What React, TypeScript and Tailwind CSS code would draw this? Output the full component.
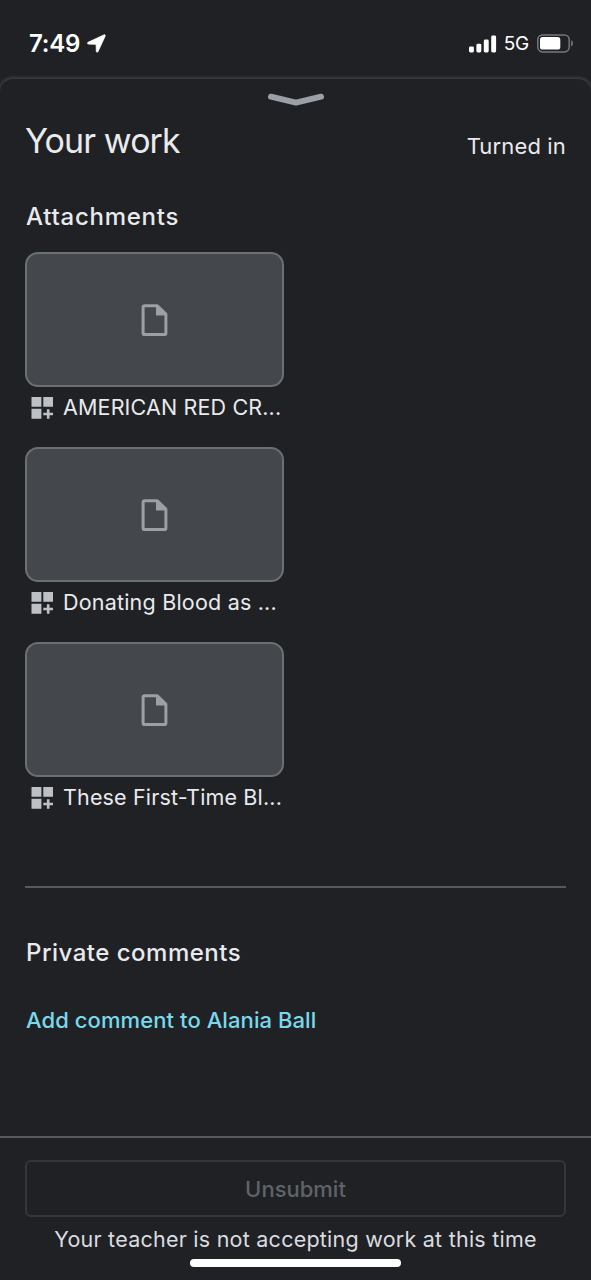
const ATTACHMENTS = [
  { title: "AMERICAN RED CR...", spacing: "tracking-[0.15px]" },
  { title: "Donating Blood as ...", spacing: "tracking-[0.2px]" },
  { title: "These First-Time Bl...", spacing: "tracking-[0.15px]" },
];

function StatusBar() {
  return (
    <header className="flex h-[77px] shrink-0 items-center justify-between pt-[10px] pr-[17px] pl-[29px] text-white">
      <div className="flex items-center gap-[7px]">
        <span className="text-[24px] leading-none font-semibold tracking-[-0.2px]">7:49</span>
        <svg width="19" height="19" viewBox="0 0 19 19" fill="currentColor" stroke="currentColor" strokeWidth="0.8" strokeLinejoin="round">
          <path d="M16.9.9 1.1 8.3c-1 .5-.8 1.7.4 1.8l7.6.2.2 7c.1 1.1 1.2 1.3 1.7.3L18.1 2.2C18.5 1.2 17.9.4 16.9.9Z" />
        </svg>
      </div>
      <div className="flex items-center">
        <svg width="28" height="18" viewBox="0 0 28 18" fill="currentColor">
          <rect x="0" y="11.5" width="4.9" height="6" rx="1.4" />
          <rect x="7.4" y="8.7" width="4.9" height="8.8" rx="1.4" />
          <rect x="14.8" y="4.6" width="4.9" height="12.9" rx="1.4" />
          <rect x="22.2" y="0.5" width="4.9" height="17" rx="1.4" />
        </svg>
        <span className="ml-[7px] text-[19px] leading-none font-normal tracking-[-0.3px]">5G</span>
        <svg className="ml-[8px]" width="37" height="19" viewBox="0 0 37 19">
          <rect x="0.8" y="0.9" width="31.4" height="17" rx="4.8" fill="none" stroke="#77787b" strokeWidth="1.5" />
          <rect x="3" y="3.1" width="20.3" height="12.5" rx="2.6" fill="#fff" />
          <path d="M34.2 6.3c2.4 1 2.4 5.2 0 6.2Z" fill="#77787b" />
        </svg>
      </div>
    </header>
  );
}

function FileIcon() {
  return (
    <svg width="27" height="32" viewBox="0 0 27 32">
      <path d="M3.5 1.7h12.6L24.9 10v19.4a1.2 1.2 0 0 1-1.2 1.2H3.5a1.4 1.4 0 0 1-1.4-1.4V3.1a1.4 1.4 0 0 1 1.4-1.4Z" fill="none" stroke="#9aa0a6" strokeWidth="3" strokeLinejoin="round" />
      <path d="M15 1.6v9.8h10.5V9.7L16.5 1.3Z" fill="#9aa0a6" />
    </svg>
  );
}

function AppsIcon() {
  return (
    <svg className="shrink-0" width="22" height="22" viewBox="0 0 22 22" fill="#bdc1c6">
      <path d="M.5 0h9.9v9.7H.5zM12.3 0h9.7v9.7h-9.7zM.5 11.8h9.9v9.9H.5zM15.9 12.3h2.6v3.4H22v2.6h-3.5v3.5h-2.6v-3.5h-3.6v-2.6h3.6z" />
    </svg>
  );
}

export default function App() {
  return (
    <div className="flex h-[1280px] w-full flex-col overflow-hidden bg-[#202124] font-[Inter,sans-serif] text-[#e8eaed]">
      <StatusBar />

      <main className="mt-[2px] flex flex-1 flex-col rounded-t-[13px] bg-[#202124] shadow-[0_-1px_3px_1px_#3d3e42]">
        <div className="flex justify-center pt-[14px]">
          <svg width="58" height="14" viewBox="0 0 58 14">
            <path d="M4 3.7 29 9.7 54 3.7" fill="none" stroke="#9aa0a6" strokeWidth="6" strokeLinecap="round" strokeLinejoin="round" />
          </svg>
        </div>

        <div className="flex h-[68px] items-center justify-between px-[25px]">
          <h1 className="text-[34px] leading-none font-normal tracking-[-0.9px]">Your work</h1>
          <span className="pt-[10px] text-[22px] leading-none tracking-[0.15px]">Turned in</span>
        </div>

        <section className="px-[25px]">
          <h2 className="mt-[30px] h-[24px] pl-px text-[24px] leading-none font-medium tracking-[0.75px]">Attachments</h2>
          <div className="mt-[23px] flex flex-col gap-[40px]">
            {ATTACHMENTS.map((item) => (
              <div key={item.title} className="h-[155px] w-[259px]">
                <div className="flex h-[135px] items-center justify-center rounded-[13px] border-2 border-[#6b7074] bg-[#44474b]">
                  <FileIcon />
                </div>
                <div className="flex h-[41px] items-center gap-[10px] pl-[6px]">
                  <AppsIcon />
                  <span className={`text-[21.5px] leading-none whitespace-nowrap ${item.spacing}`}>{item.title}</span>
                </div>
              </div>
            ))}
          </div>
        </section>

        <section className="mx-[25px] mt-[89px] border-t-2 border-[#56595d]">
          <h2 className="mt-[53px] pl-px text-[24px] leading-none font-medium tracking-[0.5px]">Private comments</h2>
          <button className="mt-[44px] block pl-px text-[22px] leading-none font-medium tracking-[0.08px] whitespace-nowrap text-[#78d9ec]">
            Add comment to Alania Ball
          </button>
        </section>
      </main>

      <footer className="flex h-[144px] shrink-0 flex-col items-center border-t-2 border-[#56595d] px-[25px] pt-[22px]">
        <button className="h-[57px] w-full shrink-0 rounded-[6px] border-2 border-[#35363a] text-[22px] leading-none font-medium text-[#5f6368]">
          Unsubmit
        </button>
        <p className="mt-[12px] text-[21.5px] leading-none tracking-[0.24px] whitespace-nowrap text-[#dadce0]">
          Your teacher is not accepting work at this time
        </p>
        <div className="mt-[8px] h-[8px] w-[211px] shrink-0 rounded-full bg-white" />
      </footer>
    </div>
  );
}
